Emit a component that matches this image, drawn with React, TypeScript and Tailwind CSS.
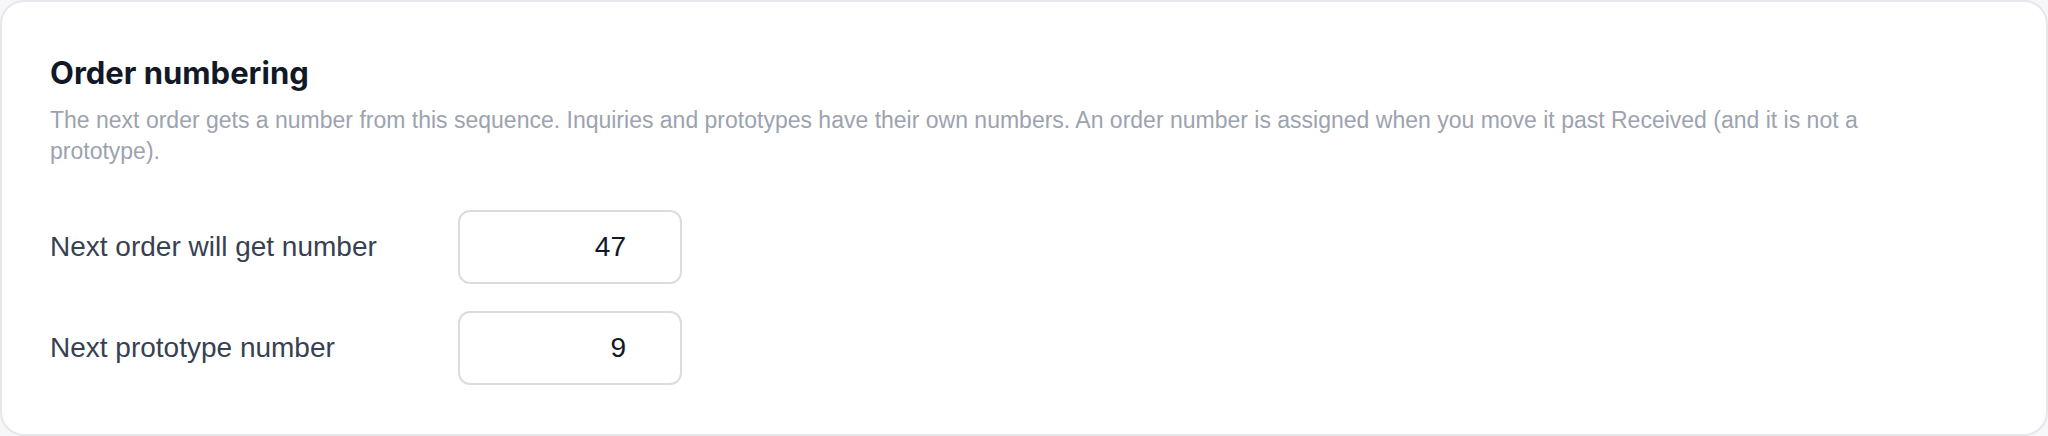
import React from "react";

type Row = { label: string; value: string };

const rows: Row[] = [
  { label: "Next order will get number", value: "47" },
  { label: "Next prototype number", value: "9" },
];

export default function App() {
  return (
    <div className="h-[436px] w-full bg-[#f6f7f9]">
      <section className="h-full rounded-[24px] border-2 border-[#e5e7eb] bg-white px-[48px] pt-[50px] pb-[50px] font-['Liberation_Sans',Arial,sans-serif]">
        <h2 className="font-['Inter',sans-serif] text-[31px] leading-[42px] font-bold text-[#111827]">
          Order numbering
        </h2>
        <p className="mt-[11px] max-w-[1920px] text-[23px] leading-[31px] text-[#9ca3af]">
          The next order gets a number from this sequence. Inquiries and prototypes have their own numbers. An order number is assigned when you move it past Received (and it is not a prototype).
        </p>
        <div className="mt-[43px] flex flex-col gap-[27px]">
          {rows.map((row) => (
            <label key={row.label} className="flex items-center">
              <span className="w-[408px] text-[28px] text-[#374151]">{row.label}</span>
              <input
                type="text"
                defaultValue={row.value}
                className="h-[74px] w-[224px] rounded-[12px] border-2 border-[#d9dce1] bg-white pr-[54px] text-right text-[28px] text-[#111827] outline-none"
              />
            </label>
          ))}
        </div>
      </section>
    </div>
  );
}
